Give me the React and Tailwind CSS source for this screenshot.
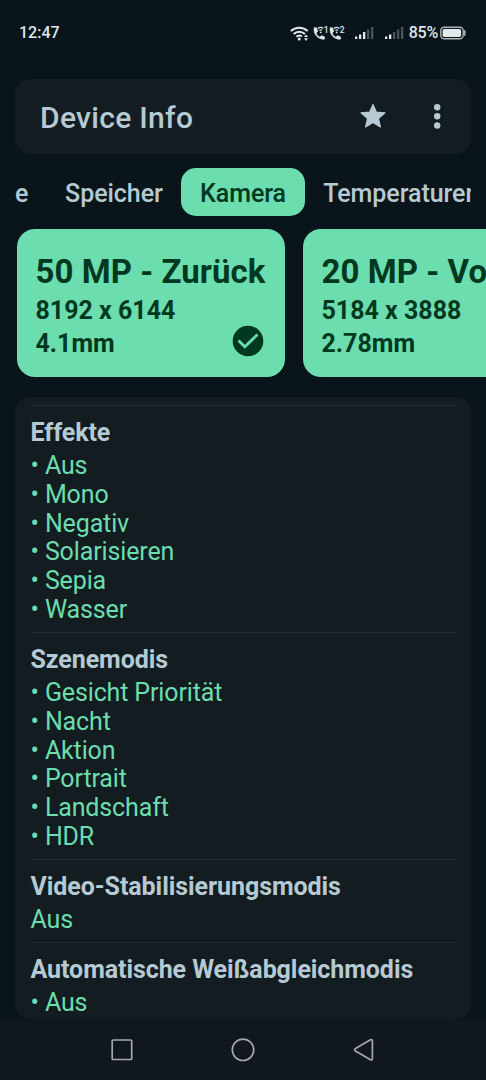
import React from 'react'

const tabs = [
  { label: 'Geräte', active: false },
  { label: 'Speicher', active: false },
  { label: 'Kamera', active: true },
  { label: 'Temperaturen', active: false },
]

const cameras = [
  { title: '50 MP - Zurück', size: '8192 x 6144', focal: '4.1mm', selected: true },
  { title: '20 MP - Vorne', size: '5184 x 3888', focal: '2.78mm', selected: false },
]

const sections = [
  { title: 'Effekte', items: ['Aus', 'Mono', 'Negativ', 'Solarisieren', 'Sepia', 'Wasser'] },
  { title: 'Szenemodis', items: ['Gesicht Priorität', 'Nacht', 'Aktion', 'Portrait', 'Landschaft', 'HDR'] },
  { title: 'Video-Stabilisierungsmodis', value: 'Aus' },
  { title: 'Automatische Weißabgleichmodis', items: ['Aus'] },
]

const CallIcon = ({ sim }) => (
  <svg className="overflow-visible" width="16.5" height="17" viewBox="0 0 16.5 17" fill="none">
    <path
      d="M2.200 2.800C1.300 9 5.700 14.300 12.200 14.200l.4-2.200-3-1.300-1.700 1.500C6 11.400 4.600 9.800 4 8l1.600-1.500-1-3.700z"
      fill="#dfe7ea" stroke="#dfe7ea" strokeWidth=".8" strokeLinejoin="round"
    />
    <path d="M6 3.600c1.500-1.700 3.900-1.700 5.400 0M7.300 5.500c.8-.9 2-.9 2.800 0" stroke="#dfe7ea" strokeWidth="1.100" />
    <circle cx="8.700" cy="7.300" r=".9" fill="#dfe7ea" />
    <text x="11.800" y="8" fontSize="8.500" fontWeight="500" fontFamily="Roboto" fill="#dfe7ea">{sim}</text>
  </svg>
)

const SignalIcon = ({ bars }) => (
  <svg width="20" height="14" viewBox="0 0 20 14">
    {[10.5, 8.5, 6, 3.5, 1].map((y, i) => (
      <rect key={y} x={i * 4} y={y} width="2.3" height={13 - y} fill={i < bars ? '#e3e9eb' : '#48545a'} />
    ))}
  </svg>
)

const StatusBar = () => (
  <div className="flex h-[66px] shrink-0 items-center justify-between pl-[19px] pr-5 text-[#dfe7e9]">
    <span className="text-[16px] font-medium leading-5">12:47</span>
    <div className="flex items-center">
      <svg className="mr-[2px]" width="20" height="17" viewBox="0 0 20 17" fill="none" stroke="#e3e9eb" strokeWidth="2">
        <path d="M.8 6c4.800-4.500 12.100-4.500 16.900 0M3.600 9c3.300-3.100 8-3.100 11.300 0M6.400 11.800c1.800-1.600 3.900-1.600 5.400-.2" />
        <circle cx="9.200" cy="14" r="1.500" fill="#e3e9eb" stroke="none" />
        <path d="M14 12l2-2.600 2 2.600zM14 13.300l2 2.600 2-2.600z" fill="#e3e9eb" stroke="none" />
      </svg>
      <CallIcon sim="1" />
      <CallIcon sim="2" />
      <div className="ml-[10px] mr-[10px]"><SignalIcon bars={3} /></div>
      <SignalIcon bars={2} />
      <span className="ml-[4px] text-[16px] font-medium leading-5 tracking-[-0.2px]">85%</span>
      <svg className="ml-[2px]" width="26" height="14" viewBox="0 0 26 14" fill="none">
        <rect x=".8" y="1.300" width="22.400" height="11.400" rx="3.500" stroke="#aeb8bb" strokeWidth="1.400" />
        <rect x="2.600" y="3" width="18.500" height="8" rx="1.800" fill="#e3e9eb" />
        <path d="M24.800 4.800v4.400" stroke="#aeb8bb" strokeWidth="1.500" strokeLinecap="round" />
      </svg>
    </div>
  </div>
)

const Header = () => (
  <header className="mx-[15px] mt-[13px] flex h-[75px] shrink-0 items-center rounded-2xl bg-[#131d21] pl-[25px] pr-[20px] text-[#b5cad3]">
    <h1 className="flex-1 whitespace-nowrap pt-[2px] text-[30px] font-medium tracking-[0.3px]">Device Info</h1>
    <svg className="mr-[37px]" width="28" height="28" viewBox="0 0 28 28">
      <path
        d="M14 1.500l3.300 7.600 8.700.7-6.600 5.700 2 8.500L14 19.500l-7.400 4.500 2-8.500L2 9.800l8.700-.7z"
        fill="#b5cad3" stroke="#b5cad3" strokeWidth="1.200" strokeLinejoin="round"
      />
    </svg>
    <svg width="27" height="28" viewBox="0 0 27 28" fill="#b5cad3">
      <circle cx="13.200" cy="4.200" r="3.200" />
      <circle cx="13.200" cy="13.300" r="3.200" />
      <circle cx="13.200" cy="22.500" r="3.200" />
    </svg>
  </header>
)

const Tabs = () => (
  <nav className="mx-[15px] mt-[14px] flex h-[48px] shrink-0 overflow-hidden">
    {/* scrolled so that the first tab is mostly out of view */}
    <div className="flex w-[31.5px] shrink-0 justify-end pr-[18px] text-[#b5cad3]">
      <span className="flex items-center whitespace-nowrap pt-[4px] text-[25px] font-medium">{tabs[0].label}</span>
    </div>
    {tabs.slice(1).map((tab) => (
      <div
        key={tab.label}
        className={`flex shrink-0 items-center rounded-[15px] px-[18.6px] pt-[4px] text-[25px] font-medium tracking-[-0.05px] ${
          tab.active ? 'bg-[#6cddaf] text-[#00391f]' : 'text-[#b5cad3]'
        }`}
      >
        {tab.label}
      </div>
    ))}
  </nav>
)

const CameraCard = ({ camera }) => (
  <div className="flex h-[148px] w-[268px] shrink-0 flex-col rounded-[18px] bg-[#6cddaf] pl-[18.5px] pr-[21px] pt-[23px] font-bold text-[#003920]">
    <h2 className="whitespace-nowrap text-[33px] leading-[40px] tracking-[0.05px]">{camera.title}</h2>
    <p className="text-[25px] leading-[37px]">{camera.size}</p>
    <div className="flex h-[30px] items-center justify-between">
      <p className="text-[25px] leading-[30px]">{camera.focal}</p>
      {camera.selected && (
        <svg className="-mt-[7px]" width="32" height="32" viewBox="0 0 32 32" fill="none">
          <circle cx="16" cy="16" r="15.300" fill="#003920" />
          <path d="M6.500 15.500l6.300 6.300L25.500 9.500" stroke="#6cddaf" strokeWidth="2.800" />
        </svg>
      )}
    </div>
  </div>
)

const Section = ({ section }) => (
  <section className="border-t border-[#202c30] pb-[7.3px] pt-[12.7px] text-[25px] leading-[28.8px]">
    <h3 className="mb-[4.5px] whitespace-nowrap font-bold tracking-[-0.07px] text-[#b5cad3]">{section.title}</h3>
    {section.value && <p className="tracking-[-0.13px] text-[#6cddaf]">{section.value}</p>}
    {section.items && (
      <ul className="tracking-[-0.13px] text-[#6cddaf]">
        {section.items.map((item) => (
          <li key={item}>• {item}</li>
        ))}
      </ul>
    )}
  </section>
)

const NavBar = () => (
  <footer className="flex h-[61px] shrink-0 items-center justify-center gap-[93px] bg-[#10171e] text-[#a3a8ac]">
    <svg width="28" height="28" viewBox="0 0 28 28" fill="none" stroke="currentColor" strokeWidth="1.700">
      <rect x="4.200" y="4" width="19.500" height="19.500" rx="1" />
    </svg>
    <svg width="28" height="28" viewBox="0 0 28 28" fill="none" stroke="currentColor" strokeWidth="1.700">
      <circle cx="14" cy="13.800" r="10.700" />
    </svg>
    <svg width="28" height="28" viewBox="0 0 28 28" fill="none" stroke="currentColor" strokeWidth="1.700" strokeLinejoin="round">
      <path d="M5.500 12.500L20.500 3.800q1.900-.8 1.900 1.200v17.600q0 2-1.900 1.200L5.500 15.100q-1.800-1.300 0-2.600z" />
    </svg>
  </footer>
)

const App = () => {
  return (
    <div className="flex h-[1080px] w-[486px] flex-col overflow-hidden bg-[#09151a] font-[Roboto,sans-serif]">
      <StatusBar />
      <Header />
      <Tabs />

      {/* Camera picker */}
      <div className="mt-[13px] flex shrink-0 gap-[18px] overflow-hidden pl-[17px]">
        {cameras.map((camera) => (
          <CameraCard key={camera.title} camera={camera} />
        ))}
      </div>

      {/* Details */}
      <main className="mx-[15px] mt-[20px] h-[622px] shrink-0 overflow-hidden rounded-2xl bg-[#131d21] px-[15.5px] pt-[8px]">
        {sections.map((section) => (
          <Section key={section.title} section={section} />
        ))}
      </main>

      <NavBar />
    </div>
  )
}

export default App
